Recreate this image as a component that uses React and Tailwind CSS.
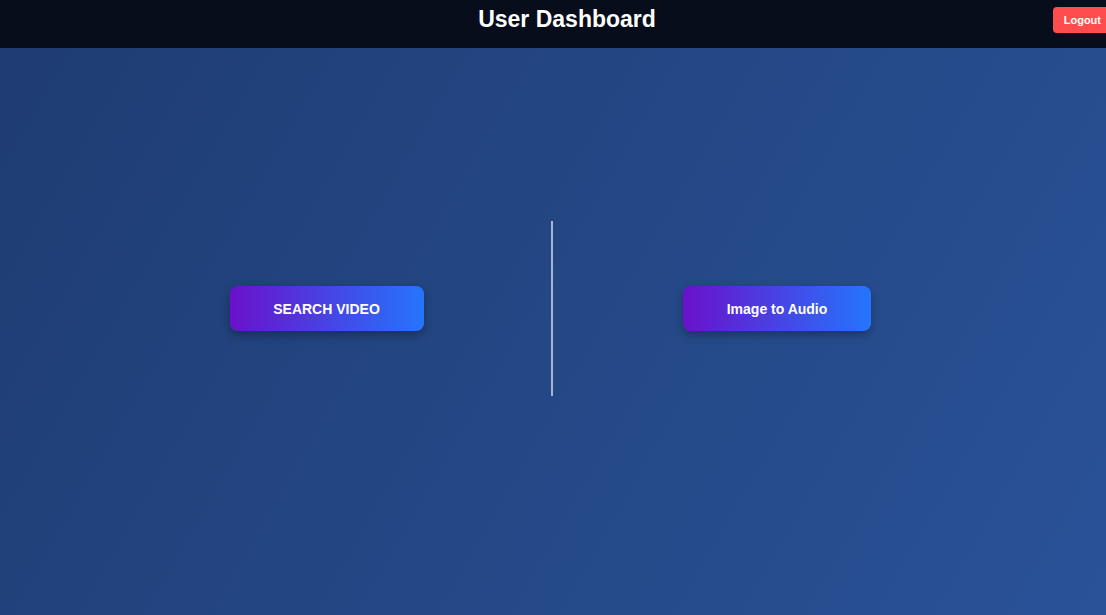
const App = () => {
  return (
    <div
      className="flex flex-col h-screen w-full overflow-hidden bg-[linear-gradient(120deg,#1e3c72,#2a5298)]"
      style={{ fontFamily: '"Liberation Sans", Arial, sans-serif' }}
    >
      {/* Header */}
      <header className="relative h-[48px] flex-shrink-0 bg-[#070d1a] flex justify-center pl-[28px] pt-[8px]">
        <h1 className="text-[23px] leading-none font-bold text-white">User Dashboard</h1>
        <button className="absolute top-[7px] right-[-6px] h-[26px] px-[11px] rounded bg-[#ff4d4d] text-white text-[11px] font-bold">
          Logout
        </button>
      </header>

      {/* Main */}
      <main className="flex-1 flex items-center pl-[102px] pb-[46px]">
        <div className="w-[449px] flex justify-center">
          <button className="w-[194px] h-[45px] pt-px rounded-lg bg-[linear-gradient(90deg,#6a11cb,#2575fc)] text-white text-[14px] font-bold shadow-[0_4px_10px_rgba(0,0,0,0.3)]">
            SEARCH VIDEO
          </button>
        </div>
        <div className="w-[2px] h-[175px] bg-white/60" />
        <div className="w-[448px] flex justify-center">
          <button className="w-[188px] h-[45px] pt-px rounded-lg bg-[linear-gradient(90deg,#6a11cb,#2575fc)] text-white text-[14px] font-bold shadow-[0_4px_10px_rgba(0,0,0,0.3)]">
            Image to Audio
          </button>
        </div>
      </main>
    </div>
  );
};

export default App;
